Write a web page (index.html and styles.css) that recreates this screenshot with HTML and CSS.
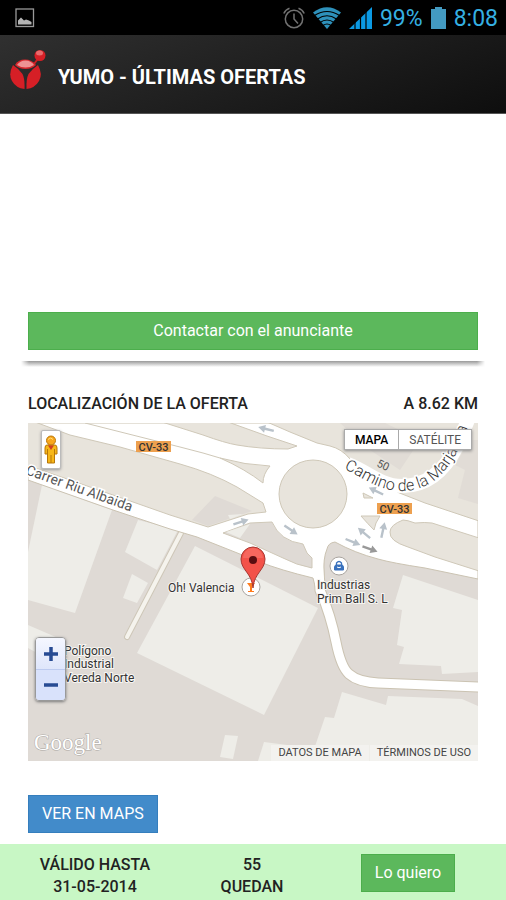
FILE: index.html
```html
<!DOCTYPE html>
<html lang="es">
<head>
<meta charset="utf-8">
<meta name="viewport" content="width=device-width, initial-scale=1">
<title>Yumo - Últimas ofertas</title>
<link rel="stylesheet" href="styles.css">
</head>
<body>
<div class="status">
  <svg class="status-photo" width="20" height="20" viewBox="0 0 20 20"><rect x="1" y="1" width="17.500" height="17.500" fill="none" stroke="#999" stroke-width="1.300"/><path d="M3 16.500v-4l3-3 3 3 2-1 3 1 2.500 1.500v2.500z" fill="#b5b5b5"/></svg>
  <div class="status-right">
    <svg width="22" height="22" viewBox="0 0 22 22" fill="none" stroke="#727272" stroke-width="1.500"><circle cx="11" cy="12" r="8.700"/><path d="M11 6.500V12l4 4.500M.8 6.500Q2.500 2.500 6.500 1.200M21.200 6.500Q19.500 2.500 15.500 1.200"/></svg>
    <svg width="28" height="22" viewBox="0 0 28 22"><path d="M0 5.500Q14-5 28 5.500L14 22z" fill="#2e91bb"/><path d="M1.500 8.500Q14 .5 26.500 8.500M4.500 12Q14 5.500 23.500 12M7 15.500Q14 10.500 21 15.500M10 18.500Q14 15.500 18 18.500" fill="none" stroke="#000" stroke-width="1.200"/></svg>
    <svg width="23" height="22" viewBox="0 0 23 22"><path d="M0 22L23 0v22z" fill="#0b9ae4"/><path d="M6 10v12M11.500 5v17M17 0v22" stroke="#000" stroke-width="1.200"/></svg>
    <span class="status-text">99%</span>
    <svg width="15" height="22" viewBox="0 0 15 22"><path d="M4 0h7v2h4v20H0V2h4z" fill="#439ac1"/></svg>
    <span class="status-text">8:08</span>
  </div>
</div>
<header class="header">
  <svg class="logo" width="36" height="42" viewBox="0 0 36 42">
    <path d="M24 15l6-8" stroke="#c81e23" stroke-width="2"/>
    <circle cx="30" cy="6.500" r="5.500" fill="#d61f26"/><ellipse cx="29.500" cy="4" rx="3.500" ry="2.500" fill="#e86a6c"/>
    <path d="M5 16Q8 10.500 15 10.500T26 16Q22 20 15.500 20T5 16z" fill="#d8272d"/><path d="M7 16Q10 11.500 15.500 11.500T24 16Q20 18.500 15.500 18.500T7 16z" fill="#ee9293"/>
    <path d="M3 16Q9 20 12.500 25Q15 30 14.500 40Q6 39 2 32T3 16z" fill="#d61f26"/><path d="M28 16Q22 20 18.500 25Q16 30 16.500 40Q25 39 29 32T28 16z" fill="#d61f26"/>
  </svg>
  <h1 class="title">YUMO - ÚLTIMAS OFERTAS</h1>
</header>
<main class="main">
  <button class="btn btn-green btn-wide" type="button">Contactar con el anunciante</button>
  <div class="divider"></div>
  <div class="heading"><h2>LOCALIZACIÓN DE LA OFERTA</h2><span>A 8.62 KM</span></div>
  <div class="map">
    <svg class="map-canvas" viewBox="28 423 450 338">
      <defs>
        <path id="riu" d="M25 474L180 529"/>
        <path id="camino" d="M344 469C362 477 378 491 402 491C430 491 446 472 456 454Q466 436 472 410"/>
        <path id="arrow" d="M-8-1.200H1V-4L8 0L1 4V1.200H-8z"/>
      </defs>
      <rect x="28" y="423" width="450" height="338" fill="#dfdad5"/>
      <g fill="#eeede8">
        <path d="M42 485L112 510L75 613L28 600V552z"/>
        <path d="M138 520L178 530L157 570L125 552z"/>
        <path d="M132 574L148 583L137 603L123 598z"/>
        <path d="M195 546L318 608L264 715L137 653z"/>
        <path d="M28 625L65 641L50 660L28 648z"/>
        <path d="M225 735L238 736L233 759L220 757z"/>
        <path d="M264 742L310 748V761H258z"/>
        <path d="M325 717L334 718L342 692L386 705L388 696L462 699L478 706V761H310z"/>
        <path d="M403 575L478 600V672L442 674L441 666L399 664L404 647L397 645L402 610L393 608z"/>
      </g>
      <path d="M181 533L127 637" stroke="#cec7b8" stroke-width="6" stroke-linecap="round"/>
      <path d="M181 533L127 637" stroke="#f5f3ed" stroke-width="4" stroke-linecap="round"/>
      <path d="M318 555L320 590Q331 616 336 642Q341 667 349 674Q358 682 378 683L480 687" fill="none" stroke="#cbc3b2" stroke-width="11"/>
      <path d="M28 423H478V579L425 568Q392 563 378 559Q355 553 335 542Q328 543 327 549Q323 558 324 575L326 590L315 586L313 578Q280 570 260 562L197 537L170 529L113 510L28 480z" fill="#fff" stroke="#cbc3b2"/>
      <path d="M318 555L320 590Q331 616 336 642Q341 667 349 674Q358 682 378 683L480 687" fill="none" stroke="#fff" stroke-width="9"/>
      <g fill="#e8e4dc" stroke="#cfc8b8">
        <path d="M27 422H35L70 435L120 447L180 464Q212 473 237 487Q250 495 263 503L266 512L248 514L208 527L170 515L133 502L27 465z"/>
        <path d="M162 422L203 435Q225 443 237 445Q260 449 288 449L297 446L267 436L228 422z"/>
        <path d="M220 458Q245 465 270 466Q263 474 263 483Q245 469 220 458z"/>
        <path d="M85 423L180 447L203 453L220 458" fill="none"/>
        <path d="M267 422L290 432L317 443L330 446Q342 449 350 459Q370 467 380 475Q396 485 397 492L425 503L479 521V422z"/>
        <circle cx="313" cy="494" r="34"/>
        <path d="M390 532Q390 525 403 520Q407 520 415 523Q425 522 432 523L479 538V571L435 557L408 547Q389 541 390 532z"/>
        <path d="M363 493L373 498H364zM361 516H380Q375 523 374 530Q368 524 361 516z"/>
      </g>
      <path d="M223 533L250 523L272 522Q280 541 303 544L307 553L312 558V568Q296 565 283 558L250 543z" fill="#dfdad5" stroke="#cfc8b8"/>
      <path d="M192 520L215 496L252 511L208 526z" fill="#dfdad5"/>
      <path d="M226 532L250 524L240 538zM228 515L243 514L230 519z" fill="#eeede8"/>
      <path d="M340 423H385L420 440L400 470L370 450zM470 440H478V504L458 498L465 470L455 465z" fill="#dfdad5" opacity=".8"/>
      <path d="M348 464C365 470 380 486 402 486C430 486 447 466 457 446L468 420" fill="none" stroke="#fff" stroke-width="14"/>
      <g fill="#b9c2ca">
        <use href="#arrow" transform="translate(266 429) rotate(194)"/><use href="#arrow" transform="translate(241 522) rotate(-18)"/>
        <use href="#arrow" transform="translate(291 530) rotate(34)"/><use href="#arrow" transform="translate(376 491) rotate(206)"/>
        <use href="#arrow" transform="translate(364 533) rotate(220)"/><use href="#arrow" transform="translate(383 530) rotate(-78)"/>
        <use href="#arrow" transform="translate(353 542) rotate(22)"/><use href="#arrow" transform="translate(370 549) rotate(20)" fill="#999"/>
      </g>
      <g class="street"><text><textPath href="#riu">Carrer Riu Albaida</textPath></text><text class="street-wide"><textPath href="#camino">Camino de la Marjalera</textPath></text></g>
      <text class="street-small" transform="translate(376 466) rotate(25)">50</text>
      <path d="M136 441h35v11h-35zM377 503h35v11h-35z" fill="#eda04f"/>
      <g class="road-no"><text x="153.500" y="450.500">CV-33</text><text x="394.500" y="512.500">CV-33</text></g>
      <g class="place">
        <text x="168" y="592">Oh! Valencia</text>
        <text x="317" y="589">Industrias</text><text x="317" y="603">Prim Ball S. L</text>
        <text x="64" y="655">Polígono</text><text x="64" y="668">Industrial</text><text x="64" y="682">Vereda Norte</text>
      </g>
      <circle cx="339" cy="566" r="9" fill="#fff" stroke="#aaa5a0"/><path d="M334.500 570V567l1-2h7l1 2v3z" fill="#3971bd" stroke="#3971bd"/><path d="M336.500 565v-2q2.500-3 5 0v2" fill="none" stroke="#3971bd" stroke-width="1.300"/><path d="M337 567q2 1.500 4 0" stroke="#fff" fill="none"/>
      <circle cx="251" cy="587" r="9" fill="#fff" stroke="#aaa5a0"/><path d="M247 583h8l-3 4v4h2v1h-6v-1h2v-4z" fill="#ff7b1c"/>
      <path d="M253 588C252 573 241 570 241 559A12 12 0 0 1 265 559C265 570 254 573 253 588z" fill="#f35249" stroke="#a73832"/><path d="M243 558a10 10 0 0 1 20 0z" fill="#f8766d" opacity=".6"/><circle cx="253" cy="560" r="4" fill="#590d10"/>
      <text class="google" x="34" y="750">Google</text>
    </svg>
    <button class="pegman" type="button" aria-label="Street View">
      <svg width="16" height="30" viewBox="0 0 16 30"><path d="M4 10h8q2 0 2 3v6h-2.500v9h-7v-9H2v-6q0-3 2-3z" fill="#f7b718" stroke="#b87708"/><path d="M8 20v8M4.500 14v5M11.500 14v5" stroke="#b87708"/><circle cx="8" cy="5.500" r="4.500" fill="#f9a61b" stroke="#b87708"/><path d="M5 10.500h6l-3 4.500z" fill="#cf3f22"/><path d="M5 4.500q3-3 5 0" stroke="#ffdf7c" fill="none"/></svg>
    </button>
    <div class="map-types"><button class="type type-on" type="button">MAPA</button><button class="type" type="button">SATÉLITE</button></div>
    <div class="zoom">
      <button type="button" aria-label="Acercar"><svg width="16" height="16" viewBox="0 0 16 16"><path d="M1 8h14M8 1v14" stroke="#274b93" stroke-width="3.500"/></svg></button>
      <button type="button" aria-label="Alejar"><svg width="16" height="16" viewBox="0 0 16 16"><path d="M1 8h14" stroke="#274b93" stroke-width="3.500"/></svg></button>
    </div>
    <div class="terms"><a href="#datos">DATOS DE MAPA</a><a href="#terminos">TÉRMINOS DE USO</a></div>
  </div>
  <button class="btn btn-blue" type="button">VER EN MAPS</button>
</main>
<footer class="footer">
  <div class="fact">VÁLIDO HASTA<br>31-05-2014</div>
  <div class="fact">55<br>QUEDAN</div>
  <button class="btn btn-green" type="button">Lo quiero</button>
</footer>
</body>
</html>
```
FILE: styles.css
```css
* { box-sizing: border-box; }
body {
  margin: 0;
  min-height: 100vh;
  display: flex;
  flex-direction: column;
  background: #fff;
  color: #222;
  font-family: Roboto, "Liberation Sans", sans-serif;
  font-size: 16px;
}
button { font-family: inherit; cursor: pointer; }
svg { display: block; flex: none; }
.status {
  display: flex;
  justify-content: space-between;
  align-items: center;
  height: 35px;
  padding: 0 8px 0 15px;
  background: #000;
}
.status-right { display: flex; align-items: center; gap: 8px; }
.status-text { color: #35b0e2; font-size: 23px; line-height: 28px; padding-top: 2px; }
.header {
  display: flex;
  align-items: center;
  gap: 12px;
  height: 79px;
  padding: 0 10px;
  background: linear-gradient(160deg, #303030, #0e0e0e);
  border-bottom: 1px solid #555;
}
.logo { margin-bottom: 8px; }
.title { margin: 6px 0 0; color: #fff; font-size: 20px; line-height: 24px; font-weight: 700; }
.main { flex: 1; padding: 198px 28px 11px; }
.btn {
  height: 38px;
  padding: 0 13px;
  border: 1px solid #4cae4c;
  color: #fff;
  font-size: 16px;
  line-height: 20px;
}
.btn-green { background: #5cb85c; }
.btn-blue { display: block; margin-top: 34px; background: #428bca; border-color: #357ebd; }
.btn-wide { display: block; width: 100%; }
.divider {
  height: 6px;
  margin: 11px -7px 0;
  background: linear-gradient(#999, #ccc 50%, #fff);
  mask-image: linear-gradient(90deg, transparent, #000 8px, #000 calc(100% - 8px), transparent);
}
.heading {
  display: flex;
  justify-content: space-between;
  margin: 26px 0 9px;
  font-weight: 500;
  line-height: 21px;
}
.heading h2 { margin: 0; font-size: 16px; font-weight: 500; }
.map { position: relative; overflow: hidden; }
.map-canvas { width: 100%; height: auto; }
.street { font-size: 14px; font-weight: 400; fill: #555; stroke: #fff; stroke-width: 3px; paint-order: stroke; }
.street-wide { font-size: 16px; font-weight: 300; fill: #333; }
.street-small { font-size: 11px; fill: #555; }
.road-no { font-size: 11px; font-weight: 500; fill: #333; text-anchor: middle; }
.place { font-size: 12px; fill: #333; stroke: #f7f5f2; stroke-width: 2px; paint-order: stroke; }
.google { font-family: "Liberation Serif", serif; font-size: 23px; fill: #fff; stroke: #aaa6a2; stroke-width: 1px; paint-order: stroke; }
.pegman, .zoom, .map-types, .terms { position: absolute; }
.pegman {
  left: 13px;
  top: 7px;
  width: 20px;
  height: 39px;
  padding: 0 1px;
  background: #fff;
  border: 1px solid #bbb;
  border-radius: 2px;
  box-shadow: 0 1px 3px #999;
}
.map-types { top: 6px; right: 6px; display: flex; box-shadow: 0 1px 3px #888; }
.type {
  height: 21px;
  padding: 0 10px;
  background: #fff;
  border: 1px solid #aaa;
  color: #555;
  font-size: 12px;
}
.type + .type { border-left: 0; }
.type-on { color: #000; font-weight: 500; }
.zoom {
  left: 7px;
  bottom: 60px;
  width: 31px;
  border: 1px solid #999;
  border-radius: 4px;
  overflow: hidden;
  box-shadow: 0 1px 3px #777;
}
.zoom button {
  display: flex;
  align-items: center;
  justify-content: center;
  width: 100%;
  height: 31px;
  padding: 0;
  border: 0;
  background: linear-gradient(#f5f7ff, #dfe6fb);
}
.zoom button + button { border-top: 1px solid #bdcbf0; background: #d9e2fb; }
.terms { right: 0; bottom: 0; display: flex; gap: 1px; font-size: 11px; line-height: 16px; }
.terms a { padding: 0 7px; background: #f3f2ef; color: #444; text-decoration: none; }
.footer {
  display: grid;
  grid-template-columns: 190px 124px 1fr;
  align-items: center;
  justify-items: center;
  height: 57px;
  padding-right: 4px;
  background: #c8f7c5;
  font-weight: 500;
}
.fact { padding-top: 6px; line-height: 22px; text-align: center; }
```
